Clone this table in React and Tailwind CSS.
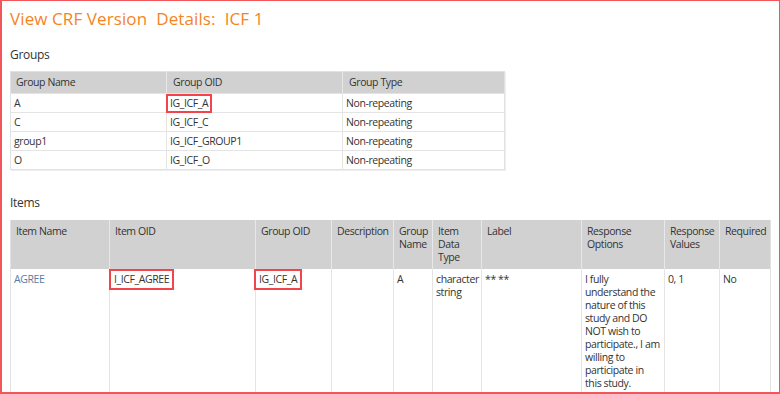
import React from 'react';

const groups = [
  { name: 'A', oid: 'IG_ICF_A', type: 'Non-repeating', marked: true },
  { name: 'C', oid: 'IG_ICF_C', type: 'Non-repeating' },
  { name: 'group1', oid: 'IG_ICF_GROUP1', type: 'Non-repeating' },
  { name: 'O', oid: 'IG_ICF_O', type: 'Non-repeating' },
];

const itemCols = [
  { label: 'Item Name', w: 'w-[99px]' },
  { label: 'Item OID', w: 'w-[146px]' },
  { label: 'Group OID', w: 'w-[76px]' },
  { label: 'Description', w: 'w-[62px]' },
  { label: 'Group Name', w: 'w-[39px]' },
  { label: 'Item Data Type', w: 'w-[49px]' },
  { label: 'Label', w: 'w-[100px]' },
  { label: 'Response Options', w: 'w-[83px]' },
  { label: 'Response Values', w: 'w-[55px]' },
  { label: 'Required', w: 'w-[51px]' },
];

// red call-out frame around a value in the groups table
const Marked = ({ children }) => (
  <span className="inline-block border-2 border-[#f2444a] -ml-[4px] px-[2px] py-[1px] -my-[3px] leading-[13px]">
    {children}
  </span>
);

// same frame for the items row, flush with the top of the cell
const MarkedTop = ({ children }) => (
  <span className="inline-block border-2 border-[#f2444a] -ml-[5px] px-[3px] py-[2px] leading-[13px]">
    {children}
  </span>
);

const App = () => {
  return (
    <div
      className="h-[394px] overflow-hidden bg-white border-t border-r border-l-2 border-b-2 border-[#f2555a] pl-[8px] text-[#333]"
      style={{ fontFamily: '"Open Sans", "Liberation Sans", sans-serif' }}
    >
      <h1 className="text-[17px] leading-[20px] pt-[8px] text-[#f5841f] font-normal tracking-[0.1px]">
        View CRF Version&nbsp; Details:&nbsp; ICF 1
      </h1>

      <h2 className="text-[12px] tracking-[-0.3px] leading-[16px] mt-[18px]">Groups</h2>
      <table className="mt-[8px] table-fixed border-collapse text-[10.5px] tracking-[-0.4px] leading-[13px] border border-[#e2e2e2] shadow-[1px_1px_0_#eeeeee]">
        <colgroup>
          <col className="w-[156px]" />
          <col className="w-[176px]" />
          <col className="w-[162px]" />
        </colgroup>
        <thead>
          <tr className="bg-[#d1d1d1]">
            <th className="h-[22px] p-0 text-left font-normal pl-[5px] border-r border-[#e8e8e8]">Group Name</th>
            <th className="h-[22px] p-0 text-left font-normal pl-[6px] border-r border-[#e8e8e8]">Group OID</th>
            <th className="h-[22px] p-0 text-left font-normal pl-[6px]">Group Type</th>
          </tr>
        </thead>
        <tbody>
          {groups.map((g) => (
            <tr key={g.oid} className="border-t border-[#e4e4e4]">
              <td className="h-[19px] p-0 pl-[3px] border-r border-[#e4e4e4]">{g.name}</td>
              <td className="h-[19px] p-0 pl-[3px] border-r border-[#e4e4e4]">
                {g.marked ? <Marked>{g.oid}</Marked> : g.oid}
              </td>
              <td className="h-[19px] p-0 pl-[3px]">{g.type}</td>
            </tr>
          ))}
        </tbody>
      </table>

      <h2 className="text-[12px] tracking-[-0.3px] leading-[16px] mt-[25px]">Items</h2>
      <table className="mt-[9px] w-[761px] table-fixed border-collapse text-[10.5px] tracking-[-0.4px] leading-[13px] border-l border-r border-[#e2e2e2]">
        <colgroup>
          {itemCols.map((c) => (
            <col key={c.label} className={c.w} />
          ))}
        </colgroup>
        <thead>
          <tr className="bg-[#d1d1d1]">
            {itemCols.map((c, i) => (
              <th
                key={c.label}
                className={`text-left align-top font-normal pl-[5px] pr-[2px] pt-[5px] pb-[5px] h-[49px] ${
                  i < itemCols.length - 1 ? 'border-r border-[#e8e8e8]' : ''
                }`}
              >
                {c.label}
              </th>
            ))}
          </tr>
        </thead>
        <tbody>
          <tr className="align-top">
            <td className="px-[3px] pt-[4px] border-r border-[#e4e4e4] text-[#5a7ba3]">AGREE</td>
            <td className="px-[4px] pt-0 border-r border-[#e4e4e4]">
              <MarkedTop>I_ICF_AGREE</MarkedTop>
            </td>
            <td className="px-[3px] pt-0 border-r border-[#e4e4e4]">
              <MarkedTop>IG_ICF_A</MarkedTop>
            </td>
            <td className="px-[3px] pt-[4px] border-r border-[#e4e4e4]"></td>
            <td className="px-[3px] pt-[4px] border-r border-[#e4e4e4]">A</td>
            <td className="px-[3px] pt-[4px] border-r border-[#e4e4e4]">character string</td>
            <td className="px-[3px] pt-[4px] border-r border-[#e4e4e4]">** **</td>
            <td className="pl-[3px] pr-[3px] pt-[4px] pb-[6px] border-r border-[#e4e4e4]">
              I fully understand the nature of this study and DO NOT wish to participate., I am willing to participate in this study.
            </td>
            <td className="px-[3px] pt-[4px] border-r border-[#e4e4e4]">0, 1</td>
            <td className="px-[3px] pt-[4px]">No</td>
          </tr>
        </tbody>
      </table>
    </div>
  );
};

export default App;
